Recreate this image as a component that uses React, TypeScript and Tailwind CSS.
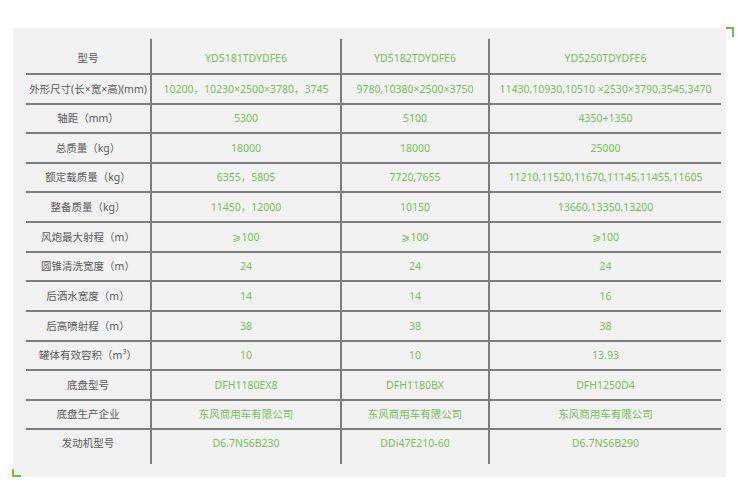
import React from 'react';

interface SpecRow {
  label: React.ReactNode;
  values: string[];
  rowClass: string;
}

// heights are content only, the 2px bottom border comes on top
const specRows: SpecRow[] = [
  { label: '型号', values: ['YD5181TDYDFE6', 'YD5182TDYDFE6', 'YD5250TDYDFE6'], rowClass: 'h-[34px] pt-[5px]' },
  { label: '外形尺寸(长×宽×高)(mm)', values: ['10200，10230×2500×3780，3745', '9780,10380×2500×3750', '11430,10930,10510 ×2530×3790,3545,3470'], rowClass: 'h-[28px]' },
  { label: '轴距（mm）', values: ['5300', '5100', '4350+1350'], rowClass: 'h-[27px]' },
  { label: '总质量（kg）', values: ['18000', '18000', '25000'], rowClass: 'h-[28px]' },
  { label: '额定载质量（kg）', values: ['6355，5805', '7720,7655', '11210,11520,11670,11145,11455,11605'], rowClass: 'h-[27px]' },
  { label: '整备质量（kg）', values: ['11450，12000', '10150', '13660,13350,13200'], rowClass: 'h-[28px]' },
  { label: '风炮最大射程（m）', values: ['⩾100', '⩾100', '⩾100'], rowClass: 'h-[28px]' },
  { label: '圆锥清洗宽度（m）', values: ['24', '24', '24'], rowClass: 'h-[27px]' },
  { label: '后洒水宽度（m）', values: ['14', '14', '16'], rowClass: 'h-[28px]' },
  { label: '后高喷射程（m）', values: ['38', '38', '38'], rowClass: 'h-[28px]' },
  {
    label: (
      <>
        罐体有效容积（m<sup className="text-[7px]">3</sup>）
      </>
    ),
    values: ['10', '10', '13.93'],
    rowClass: 'h-[27px]',
  },
  { label: '底盘型号', values: ['DFH1180EX8', 'DFH1180BX', 'DFH1250D4'], rowClass: 'h-[28px]' },
  { label: '底盘生产企业', values: ['东风商用车有限公司', '东风商用车有限公司', '东风商用车有限公司'], rowClass: 'h-[27px]' },
  { label: '发动机型号', values: ['D6.7NS6B230', 'DDi47E210-60', 'D6.7NS6B290'], rowClass: 'h-[34px] pb-[8px]' },
];

const App: React.FC = () => {
  return (
    <div className="w-[738px] h-[492px] bg-white pt-[28px] pl-[13px] relative" style={{ fontFamily: '"Noto Sans", "Noto Sans CJK SC", sans-serif' }}>
      {/* corner marks */}
      <div className="absolute left-[12px] top-[469px] w-[9px] h-[8px] border-l-2 border-b-2 border-[#6cc04a]" />
      <div className="absolute left-[726px] top-[27px] w-[8px] h-[10px] border-t-2 border-r-2 border-[#6cc04a]" />

      <div className="w-[713px] h-[449px] bg-[#f2f2f2] pt-[11px] pl-[13px]">
        <div className="w-[695px] text-[10.5px] leading-none">
          {specRows.map((row, i) => (
            <div
              key={i}
              className={`grid grid-cols-[124px_190px_148px_233px] ${i < specRows.length - 1 ? 'border-b-2 border-[#7d7d7d]' : ''}`}
            >
              <div className={`flex items-center justify-center text-[#5c5c5c] whitespace-nowrap ${row.rowClass}`}>{row.label}</div>
              {row.values.map((v, j) => (
                <div
                  key={j}
                  className={`flex items-center justify-center border-l-2 border-[#7d7d7d] text-[#78c257] whitespace-nowrap ${row.rowClass}`}
                >
                  {v}
                </div>
              ))}
            </div>
          ))}
        </div>
      </div>
    </div>
  );
};

export default App;
